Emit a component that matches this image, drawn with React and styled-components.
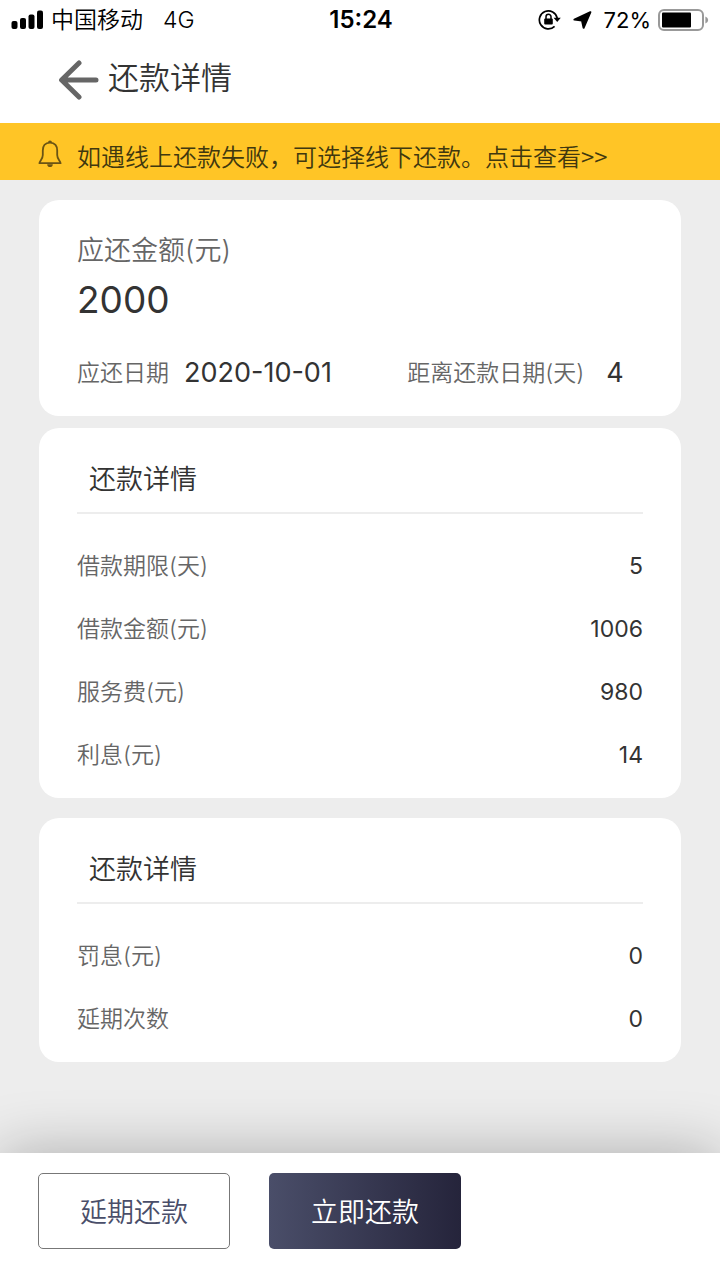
import React from "react";
import styled, { createGlobalStyle } from "styled-components";

const GlobalStyle = createGlobalStyle`
  * {
    box-sizing: border-box;
  }
  body {
    margin: 0;
    background-color: #ededed;
    font-family: Inter, "Noto Sans CJK SC", sans-serif;
    font-weight: 350;
    color: #333;
  }
  button {
    font-family: inherit;
    font-weight: inherit;
    cursor: pointer;
  }
`;

const Styled = {
  Page: styled.div`
    display: flex;
    flex-direction: column;
    min-height: 100vh;
  `,
  StatusBar: styled.div`
    display: grid;
    grid-template-columns: 1fr auto 1fr;
    align-items: center;
    height: 40px;
    padding: 0 11px;
    background-color: #fff;
    color: #000;
    font-size: 23px;
    line-height: 32px;
    svg {
      display: block;
    }
  `,
  StatusLeft: styled.div`
    display: flex;
    align-items: center;
    gap: 8px;
  `,
  Network: styled.span`
    margin-left: 12px;
    font-size: 23px;
  `,
  Time: styled.div`
    padding-left: 2px;
    font-size: 24px;
    font-weight: 600;
  `,
  StatusRight: styled.div`
    display: flex;
    align-items: center;
    justify-content: flex-end;
    gap: 12px;
  `,
  Battery: styled.div`
    display: flex;
    align-items: center;
    gap: 7px;
    font-size: 22px;
    font-weight: 400;
  `,
  Header: styled.header`
    display: flex;
    align-items: center;
    gap: 9px;
    height: 83px;
    padding: 0 58px 8px;
    background-color: #fff;
    h1 {
      margin: 0;
      font-size: 31px;
      font-weight: 350;
      line-height: 44px;
    }
  `,
  BackButton: styled.button`
    display: flex;
    padding: 4px 0 0;
    border: none;
    background: none;
  `,
  Notice: styled.a`
    display: flex;
    align-items: center;
    gap: 15px;
    height: 57px;
    padding: 4px 38px 0;
    background-color: #ffc526;
    color: #40380f;
    font-size: 24px;
    line-height: 32px;
    text-decoration: none;
    span {
      padding-top: 4px;
      font-family: "Noto Sans CJK SC", sans-serif;
      line-height: 28px;
    }
  `,
  Content: styled.main`
    flex: 1;
    padding: 20px 39px;
  `,
  Card: styled.section`
    margin-bottom: ${(props) => props.$gap || 20}px;
    padding: ${(props) => props.$padding || "16px 38px 12px"};
    border-radius: 20px;
    background-color: #fff;
  `,
  AmountLabel: styled.div`
    padding-top: 4px;
    color: #666;
    font-size: 27px;
    line-height: 38px;
  `,
  Amount: styled.div`
    font-size: 37px;
    font-weight: 400;
    line-height: 60px;
  `,
  Dates: styled.div`
    display: grid;
    grid-template-columns: 7fr 5fr;
    margin-top: 20px;
  `,
  DateItem: styled.div`
    display: flex;
    align-items: center;
    gap: ${(props) => props.$gap}px;
    height: 46px;
    white-space: nowrap;
  `,
  Label: styled.span`
    color: #666;
    font-size: 23px;
    line-height: 32px;
  `,
  DateValue: styled.span`
    font-size: 27px;
    font-weight: 400;
    line-height: 32px;
  `,
  CardTitle: styled.h2`
    margin: 0 0 20px;
    padding: 4px 0 0 12px;
    border-bottom: 2px solid #ededed;
    font-size: 27px;
    font-weight: 350;
    line-height: 64px;
  `,
  Row: styled.div`
    display: flex;
    align-items: center;
    justify-content: space-between;
    height: 63px;
  `,
  Value: styled.span`
    font-size: 23px;
    font-weight: 400;
    line-height: 32px;
  `,
  Footer: styled.footer`
    position: relative;
    display: flex;
    gap: 39px;
    padding: 20px 38px 31px;
    background-color: #fff;
    box-shadow: 0 0 60px rgba(0, 0, 0, 0.28);
  `,
};

Styled.Button = styled.button`
  width: 192px;
  height: 76px;
  padding: 0 0 2px;
  border: 1px solid #777;
  border-radius: 5px;
  background-color: #fff;
  color: #4a4e69;
  font-size: 27px;
`;

Styled.PrimaryButton = styled(Styled.Button)`
  border: none;
  background: linear-gradient(to right, #4a4e69, #25243b);
  color: #fff;
`;

const loanRows = [
  { label: "借款期限(天)", value: "5" },
  { label: "借款金额(元)", value: "1006" },
  { label: "服务费(元)", value: "980" },
  { label: "利息(元)", value: "14" },
];

const overdueRows = [
  { label: "罚息(元)", value: "0" },
  { label: "延期次数", value: "0" },
];

const SignalIcon = () => (
  <svg width="32" height="20" viewBox="0 0 32 20">
    <rect x="0.5" y="11" width="6" height="8" rx="2" />
    <rect x="9" y="8" width="6" height="11" rx="2" />
    <rect x="17.5" y="4.5" width="6" height="14.5" rx="2" />
    <rect x="26" y="0.5" width="6" height="18.5" rx="2" />
  </svg>
);

const RotationLockIcon = () => (
  <svg width="23" height="22" viewBox="0 0 23 22" fill="none" stroke="#000">
    <path d="M19.2 9.2A9 9 0 1 0 16.6 17.4" strokeWidth="1.7" />
    <path d="M15.6 8.8H22.8L19.2 13Z" fill="#000" stroke="none" />
    <rect x="6.2" y="9.6" width="8.6" height="6" rx="1" fill="#000" stroke="none" />
    <path d="M8 10V7.8a2.5 2.5 0 0 1 5 0V10" strokeWidth="1.5" />
  </svg>
);

const LocationIcon = () => (
  <svg width="19" height="18" viewBox="0 0 19 18" strokeLinejoin="round">
    <path d="M17.4 1.2 1.4 8.6 9 9.6 10.6 16.8 17.4 1.2Z" stroke="#000" strokeWidth="2" />
  </svg>
);

const BatteryIcon = () => (
  <svg width="51" height="22" viewBox="0 0 51 22">
    <rect x="1" y="1" width="44" height="20" rx="5" fill="none" stroke="#999" strokeWidth="2" />
    <rect x="4" y="3.5" width="29" height="15" rx="1" />
    <path d="M47.4 7.4q2.8 1.2 2.8 3.6t-2.8 3.6Z" fill="#999" />
  </svg>
);

const BackIcon = () => (
  <svg
    width="41"
    height="40"
    viewBox="0 0 41 40"
    fill="none"
    stroke="#666"
    strokeWidth="5"
    strokeLinecap="round"
    strokeLinejoin="round"
  >
    <path d="M21 3 3.6 20 21 37M4 20H38" />
  </svg>
);

const BellIcon = () => (
  <svg
    width="24"
    height="28"
    viewBox="0 0 24 28"
    fill="none"
    stroke="#6a5415"
    strokeWidth="1.8"
    strokeLinejoin="round"
  >
    <path d="M12 2.6C7 2.6 4.8 6 4.8 10.4V15C4.8 19 2.2 20.4 1.4 23.2H22.6C21.8 20.4 19.2 19 19.2 15V10.4C19.2 6 17 2.6 12 2.6Z" />
    <path d="M10 2.4a2 2 0 0 1 4 0ZM9.2 24.2h5.6a2.8 2.8 0 0 1-5.6 0Z" fill="#6a5415" stroke="none" />
  </svg>
);

const DetailCard = ({ title, rows }) => (
  <Styled.Card>
    <Styled.CardTitle>{title}</Styled.CardTitle>
    {rows.map((row) => (
      <Styled.Row key={row.label}>
        <Styled.Label>{row.label}</Styled.Label>
        <Styled.Value>{row.value}</Styled.Value>
      </Styled.Row>
    ))}
  </Styled.Card>
);

const App = () => {
  return (
    <Styled.Page>
      <GlobalStyle />
      <Styled.StatusBar>
        <Styled.StatusLeft>
          <SignalIcon />
          <span>中国移动</span>
          <Styled.Network>4G</Styled.Network>
        </Styled.StatusLeft>
        <Styled.Time>15:24</Styled.Time>
        <Styled.StatusRight>
          <RotationLockIcon />
          <LocationIcon />
          <Styled.Battery>
            72%
            <BatteryIcon />
          </Styled.Battery>
        </Styled.StatusRight>
      </Styled.StatusBar>
      <Styled.Header>
        <Styled.BackButton type="button" aria-label="返回">
          <BackIcon />
        </Styled.BackButton>
        <h1>还款详情</h1>
      </Styled.Header>
      <Styled.Notice href="#offline">
        <BellIcon />
        <span>如遇线上还款失败，可选择线下还款。点击查看&gt;&gt;</span>
      </Styled.Notice>
      <Styled.Content>
        <Styled.Card $gap={12} $padding="28px 38px 20px">
          <Styled.AmountLabel>应还金额(元)</Styled.AmountLabel>
          <Styled.Amount>2000</Styled.Amount>
          <Styled.Dates>
            <Styled.DateItem $gap={15}>
              <Styled.Label>应还日期</Styled.Label>
              <Styled.DateValue>2020-10-01</Styled.DateValue>
            </Styled.DateItem>
            <Styled.DateItem $gap={22}>
              <Styled.Label>距离还款日期(天)</Styled.Label>
              <Styled.DateValue>4</Styled.DateValue>
            </Styled.DateItem>
          </Styled.Dates>
        </Styled.Card>
        <DetailCard title="还款详情" rows={loanRows} />
        <DetailCard title="还款详情" rows={overdueRows} />
      </Styled.Content>
      <Styled.Footer>
        <Styled.Button type="button">延期还款</Styled.Button>
        <Styled.PrimaryButton type="button">立即还款</Styled.PrimaryButton>
      </Styled.Footer>
    </Styled.Page>
  );
};

export default App;
